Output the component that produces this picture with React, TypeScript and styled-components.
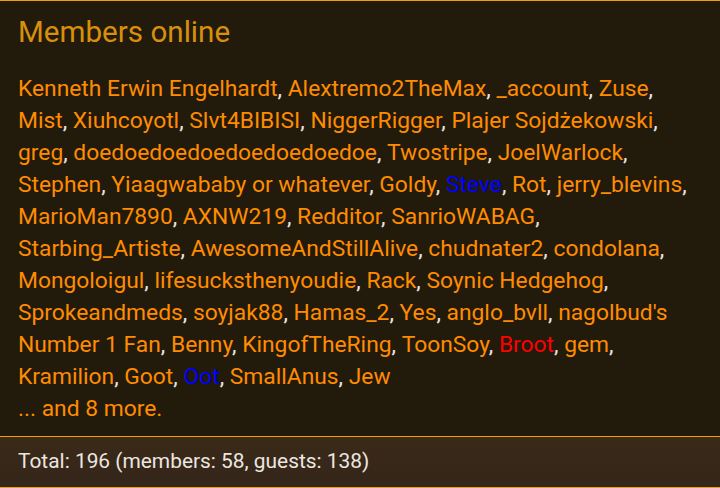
import React from 'react';
import styled, { createGlobalStyle } from 'styled-components';

type Member = {
  name: string;
  tone?: 'blue' | 'red';
};

const members: Member[] = [
  { name: 'Kenneth Erwin Engelhardt' },
  { name: 'Alextremo2TheMax' },
  { name: '_account' },
  { name: 'Zuse' },
  { name: 'Mist' },
  { name: 'Xiuhcoyotl' },
  { name: 'Slvt4BIBISI' },
  { name: 'NiggerRigger' },
  { name: 'Plajer Sojdżekowski' },
  { name: 'greg' },
  { name: 'doedoedoedoedoedoedoedoe' },
  { name: 'Twostripe' },
  { name: 'JoelWarlock' },
  { name: 'Stephen' },
  { name: 'Yiaagwababy or whatever' },
  { name: 'Goldy' },
  { name: 'Steve', tone: 'blue' },
  { name: 'Rot' },
  { name: 'jerry_blevins' },
  { name: 'MarioMan7890' },
  { name: 'AXNW219' },
  { name: 'Redditor' },
  { name: 'SanrioWABAG' },
  { name: 'Starbing_Artiste' },
  { name: 'AwesomeAndStillAlive' },
  { name: 'chudnater2' },
  { name: 'condolana' },
  { name: 'Mongoloigul' },
  { name: 'lifesucksthenyoudie' },
  { name: 'Rack' },
  { name: 'Soynic Hedgehog' },
  { name: 'Sprokeandmeds' },
  { name: 'soyjak88' },
  { name: 'Hamas_2' },
  { name: 'Yes' },
  { name: 'anglo_bvll' },
  { name: "nagolbud's Number 1 Fan" },
  { name: 'Benny' },
  { name: 'KingofTheRing' },
  { name: 'ToonSoy' },
  { name: 'Broot', tone: 'red' },
  { name: 'gem' },
  { name: 'Kramilion' },
  { name: 'Goot' },
  { name: 'Oot', tone: 'blue' },
  { name: 'SmallAnus' },
  { name: 'Jew' },
];

const GlobalStyle = createGlobalStyle`
  body {
    margin: 0;
    background: #221a0c;
    font-family: Roboto, "Liberation Sans", sans-serif;
  }
`;

const Block = styled.section`
  width: 720px;
  height: 488px;
  display: flex;
  flex-direction: column;
  background: #221a0b;
  border-top: 1px solid #f39c12;
  box-sizing: border-box;
`;

const Header = styled.h3`
  margin: 0;
  padding: 13px 18px 0;
  font-size: 29.6px;
  line-height: 36px;
  font-weight: 400;
  color: #d8900c;
`;

const Body = styled.div`
  flex: 1;
  padding: 23px 18px 0;
  font-size: 22.8px;
  line-height: 32px;
`;

const NameList = styled.ul`
  list-style: none;
  margin: 0;
  padding: 0;
  display: inline;
`;

const NameItem = styled.li`
  display: inline;
  color: #e8e4e0;
`;

const toneColor = {
  blue: '#0000ff',
  red: '#ff0000',
};

const Username = styled.a<{ $tone?: 'blue' | 'red' }>`
  color: ${(p) => (p.$tone ? toneColor[p.$tone] : '#ff8c00')};
  text-decoration: none;
`;

const More = styled.div`
  color: #ff8c00;
`;

const Footer = styled.div`
  height: 52px;
  display: flex;
  align-items: center;
  padding: 0 18px 2px;
  box-sizing: border-box;
  border-top: 1px solid #f39c12;
  border-bottom: 1px solid #f39c12;
  background: linear-gradient(#3b2a17, #33251a);
  color: #ece6e0;
  font-size: 20.9px;
`;

const App: React.FC = () => {
  return (
    <>
      <GlobalStyle />
      <Block>
        <Header>Members online</Header>
        <Body>
          <NameList>
            {members.map((m, i) => (
              <NameItem key={m.name}>
                <Username href="#" $tone={m.tone}>
                  {m.name}
                </Username>
                {i < members.length - 1 ? ', ' : ''}
              </NameItem>
            ))}
          </NameList>
          <More>... and 8 more.</More>
        </Body>
        <Footer>Total: 196 (members: 58, guests: 138)</Footer>
      </Block>
    </>
  );
};

export default App;
